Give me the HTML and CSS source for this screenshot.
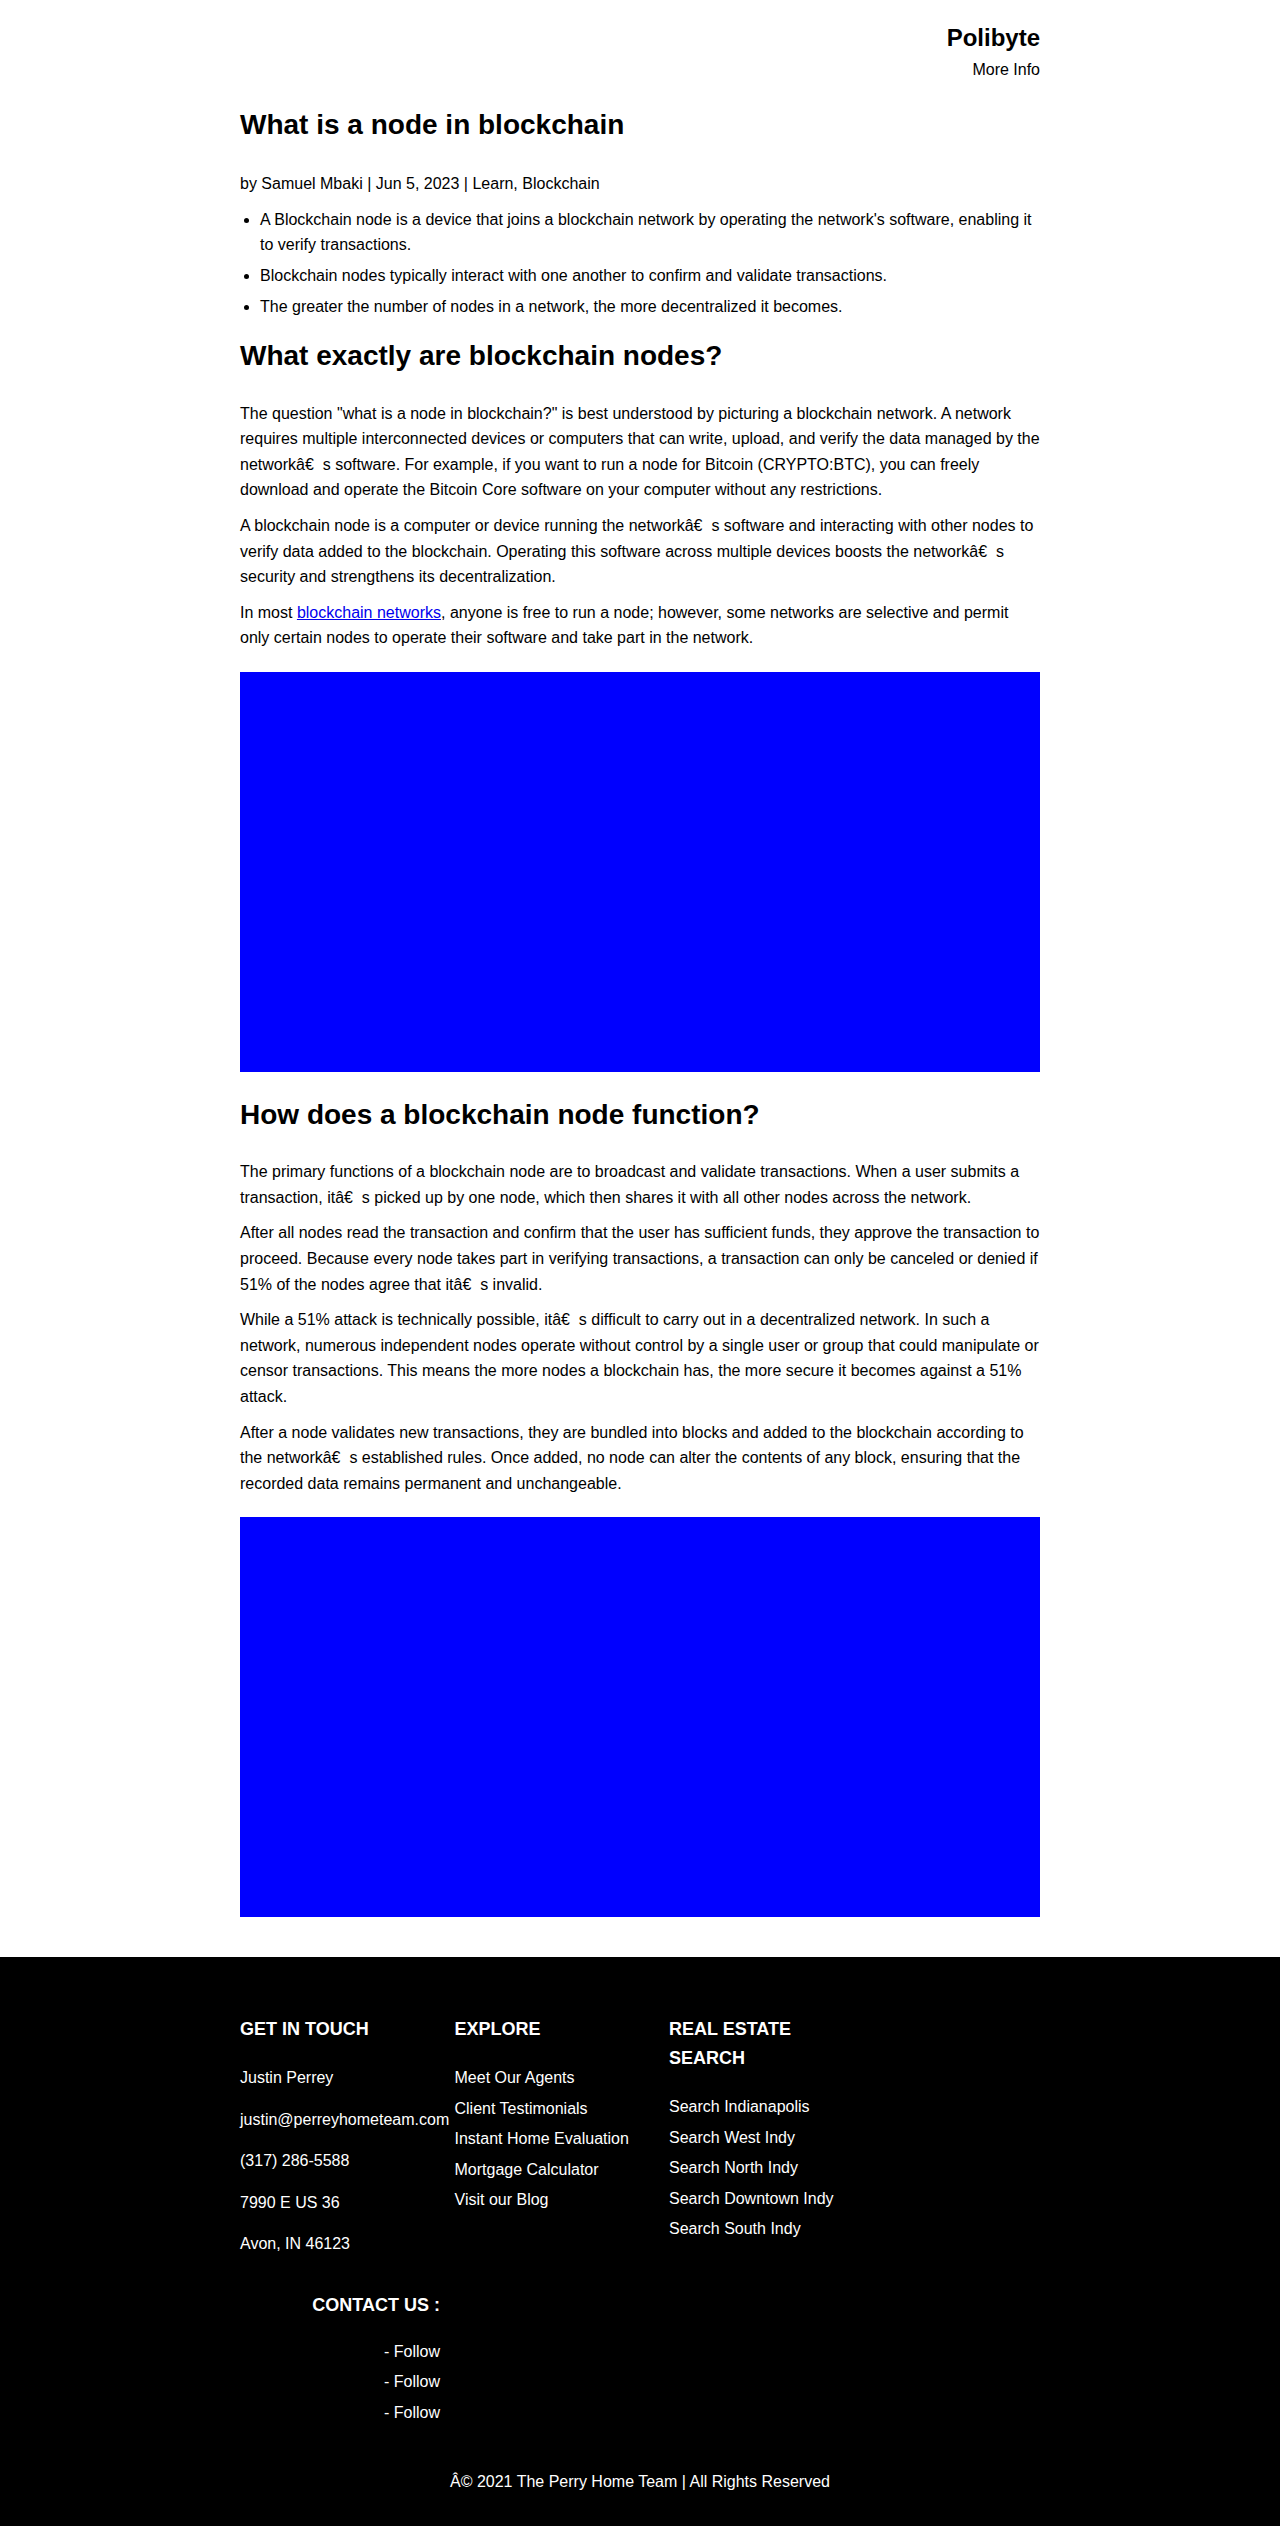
FILE: index.html
```html
<!DOCTYPE html>
<html lang="en">
<head>
<meta charset="utf-8">
<title>What is a node in blockchain - Polibyte</title>
<link rel="stylesheet" href="styles.css">
</head>
<body>
<header class="site-header">
  <div class="brand">Polibyte</div>
  <div class="more-info">More Info</div>
</header>
<main class="article">
  <h1 class="title">What is a node in blockchain</h1>
  <p class="byline">by Samuel Mbaki | Jun 5, 2023 | Learn, Blockchain</p>
  <ul class="summary">
    <li>A Blockchain node is a device that joins a blockchain network by operating the network's software, enabling it to verify transactions.</li>
    <li>Blockchain nodes typically interact with one another to confirm and validate transactions.</li>
    <li>The greater the number of nodes in a network, the more decentralized it becomes.</li>
  </ul>
  <h2 class="section-title">What exactly are blockchain nodes?</h2>
  <p>The question "what is a node in blockchain?" is best understood by picturing a blockchain network. A network requires multiple interconnected devices or computers that can write, upload, and verify the data managed by the networkâ€&nbsp;&nbsp;s software. For example, if you want to run a node for Bitcoin (CRYPTO:BTC), you can freely download and operate the Bitcoin Core software on your computer without any restrictions.</p>
  <p>A blockchain node is a computer or device running the networkâ€&nbsp;&nbsp;s software and interacting with other nodes to verify data added to the blockchain. Operating this software across multiple devices boosts the networkâ€&nbsp;&nbsp;s security and strengthens its decentralization.</p>
  <p>In most <a href="#" class="link">blockchain networks</a>, anyone is free to run a node; however, some networks are selective and permit only certain nodes to operate their software and take part in the network.</p>
  <div class="figure"></div>
  <h2 class="section-title">How does a blockchain node function?</h2>
  <p>The primary functions of a blockchain node are to broadcast and validate transactions. When a user submits a transaction, itâ€&nbsp;&nbsp;s picked up by one node, which then shares it with all other nodes across the network.</p>
  <p>After all nodes read the transaction and confirm that the user has sufficient funds, they approve the transaction to proceed. Because every node takes part in verifying transactions, a transaction can only be canceled or denied if 51% of the nodes agree that itâ€&nbsp;&nbsp;s invalid.</p>
  <p>While a 51% attack is technically possible, itâ€&nbsp;&nbsp;s difficult to carry out in a decentralized network. In such a network, numerous independent nodes operate without control by a single user or group that could manipulate or censor transactions. This means the more nodes a blockchain has, the more secure it becomes against a 51% attack.</p>
  <p>After a node validates new transactions, they are bundled into blocks and added to the blockchain according to the networkâ€&nbsp;&nbsp;s established rules. Once added, no node can alter the contents of any block, ensuring that the recorded data remains permanent and unchangeable.</p>
  <div class="figure"></div>
</main>
<footer class="site-footer">
  <div class="footer-inner">
    <div class="footer-cols">
      <div class="footer-col">
        <h3 class="footer-heading">GET IN TOUCH</h3>
        <p class="contact-line">Justin Perrey</p>
        <p class="contact-line">justin@perreyhometeam.com</p>
        <p class="contact-line">(317) 286-5588</p>
        <p class="contact-line">7990 E US 36</p>
        <p class="contact-line">Avon, IN 46123</p>
      </div>
      <div class="footer-col">
        <h3 class="footer-heading">EXPLORE</h3>
        <ul class="footer-links">
          <li>Meet Our Agents</li>
          <li>Client Testimonials</li>
          <li>Instant Home Evaluation</li>
          <li>Mortgage Calculator</li>
          <li>Visit our Blog</li>
        </ul>
      </div>
      <div class="footer-col">
        <h3 class="footer-heading">REAL ESTATE SEARCH</h3>
        <ul class="footer-links">
          <li>Search Indianapolis</li>
          <li>Search West Indy</li>
          <li>Search North Indy</li>
          <li>Search Downtown Indy</li>
          <li>Search South Indy</li>
        </ul>
      </div>
    </div>
    <div class="contact-us">
      <h3 class="footer-heading contact-heading">CONTACT US :</h3>
      <ul class="footer-links">
        <li>- Follow</li>
        <li>- Follow</li>
        <li>- Follow</li>
      </ul>
    </div>
  </div>
  <p class="copyright">Â© 2021 The Perry Home Team | All Rights Reserved</p>
</footer>
</body>
</html>
```
FILE: styles.css
```css
html {
  margin: 0;
  padding: 0;
  background: #000;
}

body {
  margin: 0;
  padding: 0;
  font-family: "Liberation Sans", Arial, sans-serif;
  font-size: 16px;
  line-height: 1.6;
  color: #000;
  background: #fff;
}

.site-header {
  width: 800px;
  margin: 0 auto;
  padding-top: 19px;
  text-align: right;
}

.brand {
  font-size: 24px;
  font-weight: bold;
}

.more-info {
  font-size: 16px;
}

.article {
  width: 800px;
  margin: 0 auto;
  padding-bottom: 19px;
}

.title {
  font-size: 28px;
  font-weight: bold;
  margin: 20px 0 23.5px;
}

.byline {
  margin: 0 0 17px;
}

.summary {
  margin: 0 0 15px;
  padding-left: 20px;
}

.summary li + li {
  margin-top: 5px;
}

.section-title {
  font-size: 28px;
  font-weight: bold;
  margin: 0 0 21.5px;
}

.article p {
  margin: 0 0 10px;
}

.link {
  color: #0000ee;
  text-decoration: underline;
}

.figure {
  height: 400px;
  background: #0000ff;
  margin: 21px 0;
}

.site-footer {
  background: #000;
  color: #fff;
  padding: 58px 0 22px;
}

.footer-inner {
  width: 800px;
  margin: 0 auto;
}

.footer-cols {
  display: flex;
  gap: 14.5px;
}

.footer-col {
  width: 200px;
}

.footer-heading {
  font-size: 18px;
  font-weight: bold;
  margin: 0 0 21px;
}

.contact-line {
  margin: 0 0 16px;
}

.footer-links {
  list-style: none;
  margin: 0;
  padding: 0;
}

.footer-links li + li {
  margin-top: 5px;
}

.contact-us {
  width: 200px;
  text-align: right;
  margin-top: 18px;
}

.contact-heading {
  margin-bottom: 19px;
}

.copyright {
  text-align: center;
  margin: 43px 0 0;
}
```
